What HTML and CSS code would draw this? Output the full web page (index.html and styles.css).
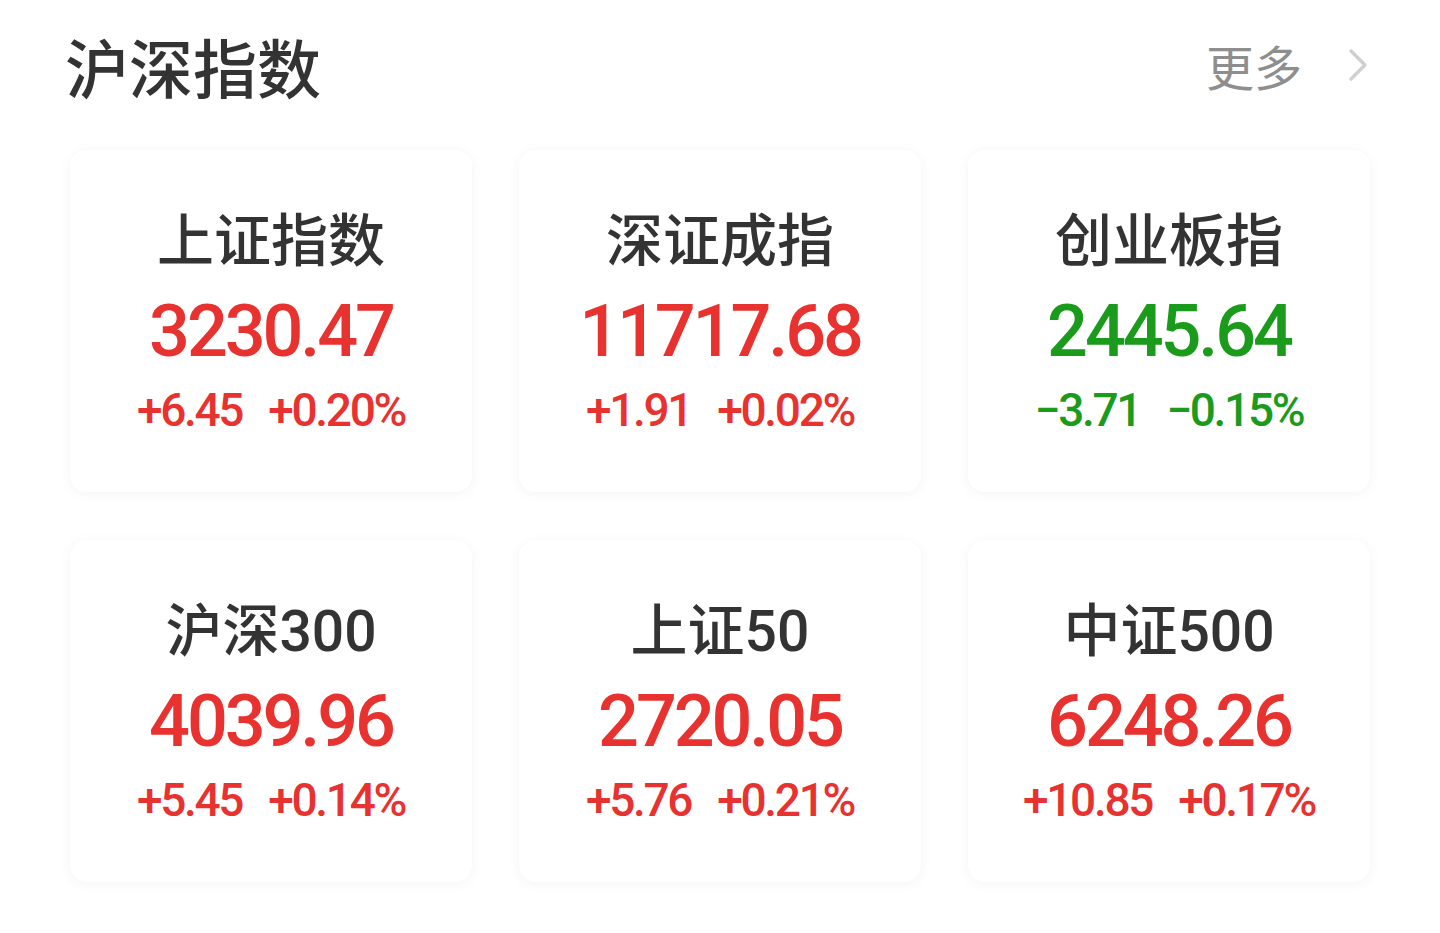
FILE: index.html
```html
<!DOCTYPE html>
<html lang="zh-CN">
<head>
<meta charset="utf-8">
<title>沪深指数</title>
<link rel="stylesheet" href="styles.css">
</head>
<body>
<div class="page">
  <header class="header">
    <h1 class="title">沪深指数</h1>
    <a class="more">
      <span class="more-text">更多</span>
      <svg class="chev" width="20" height="34" viewBox="0 0 20 34"><polyline points="3,3 17,17 3,31" fill="none" stroke="#cfcfcf" stroke-width="3.2" stroke-linecap="round" stroke-linejoin="round"/></svg>
    </a>
  </header>
  <div class="grid">
    <div class="card">
      <div class="name">上证指数</div>
      <div class="value up">3230.47</div>
      <div class="change up"><span>+6.45</span><span>+0.20%</span></div>
    </div>
    <div class="card">
      <div class="name">深证成指</div>
      <div class="value up">11717.68</div>
      <div class="change up"><span>+1.91</span><span>+0.02%</span></div>
    </div>
    <div class="card">
      <div class="name">创业板指</div>
      <div class="value down">2445.64</div>
      <div class="change down"><span>−3.71</span><span>−0.15%</span></div>
    </div>
    <div class="card">
      <div class="name">沪深300</div>
      <div class="value up">4039.96</div>
      <div class="change up"><span>+5.45</span><span>+0.14%</span></div>
    </div>
    <div class="card">
      <div class="name">上证50</div>
      <div class="value up">2720.05</div>
      <div class="change up"><span>+5.76</span><span>+0.21%</span></div>
    </div>
    <div class="card">
      <div class="name">中证500</div>
      <div class="value up">6248.26</div>
      <div class="change up"><span>+10.85</span><span>+0.17%</span></div>
    </div>
  </div>
</div>
</body>
</html>
```

FILE: styles.css
```css
html, body {
  margin: 0;
  padding: 0;
  background: #ffffff;
}
body {
  font-family: Roboto, "Noto Sans CJK SC", sans-serif;
  color: #333333;
}
.page {
  width: 1440px;
  height: 933px;
  box-sizing: border-box;
  padding: 33px 70px 0 70px;
}
.header {
  display: flex;
  align-items: center;
  justify-content: space-between;
  height: 64px;
  margin-bottom: 53px;
}
.title {
  margin: 0 0 0 -5px;
  font-family: "Noto Sans CJK SC", sans-serif;
  font-size: 64px;
  line-height: 64px;
  font-weight: 500;
  color: #333333;
}
.more {
  display: flex;
  align-items: center;
  gap: 46px;
  margin-right: 2px;
}
.more-text {
  font-family: "Noto Sans CJK SC", sans-serif;
  font-size: 48px;
  line-height: 48px;
  color: #8e8e8e;
}
.chev {
  display: block;
}
.grid {
  display: grid;
  grid-template-columns: repeat(3, 402px);
  grid-auto-rows: 342px;
  column-gap: 47px;
  row-gap: 48px;
}
.card {
  background: #ffffff;
  border-radius: 16px;
  box-shadow: 0 2px 14px rgba(0, 0, 0, 0.045), 0 0 2px rgba(0, 0, 0, 0.02);
  display: flex;
  flex-direction: column;
  align-items: center;
  padding-top: 62px;
  box-sizing: border-box;
}
.name {
  font-size: 57px;
  line-height: 60px;
  height: 60px;
  font-weight: 500;
  color: #333333;
}
.value {
  margin-top: 24px;
  font-size: 72px;
  line-height: 72px;
  height: 72px;
  font-weight: 500;
  letter-spacing: -3.1px;
}
.change {
  margin-top: 19px;
  display: flex;
  gap: 26px;
  font-size: 46px;
  line-height: 46px;
  height: 46px;
  font-weight: 500;
  letter-spacing: -2.3px;
}
.up {
  color: #e8322f;
}
.down {
  color: #1b9b1b;
}
```
